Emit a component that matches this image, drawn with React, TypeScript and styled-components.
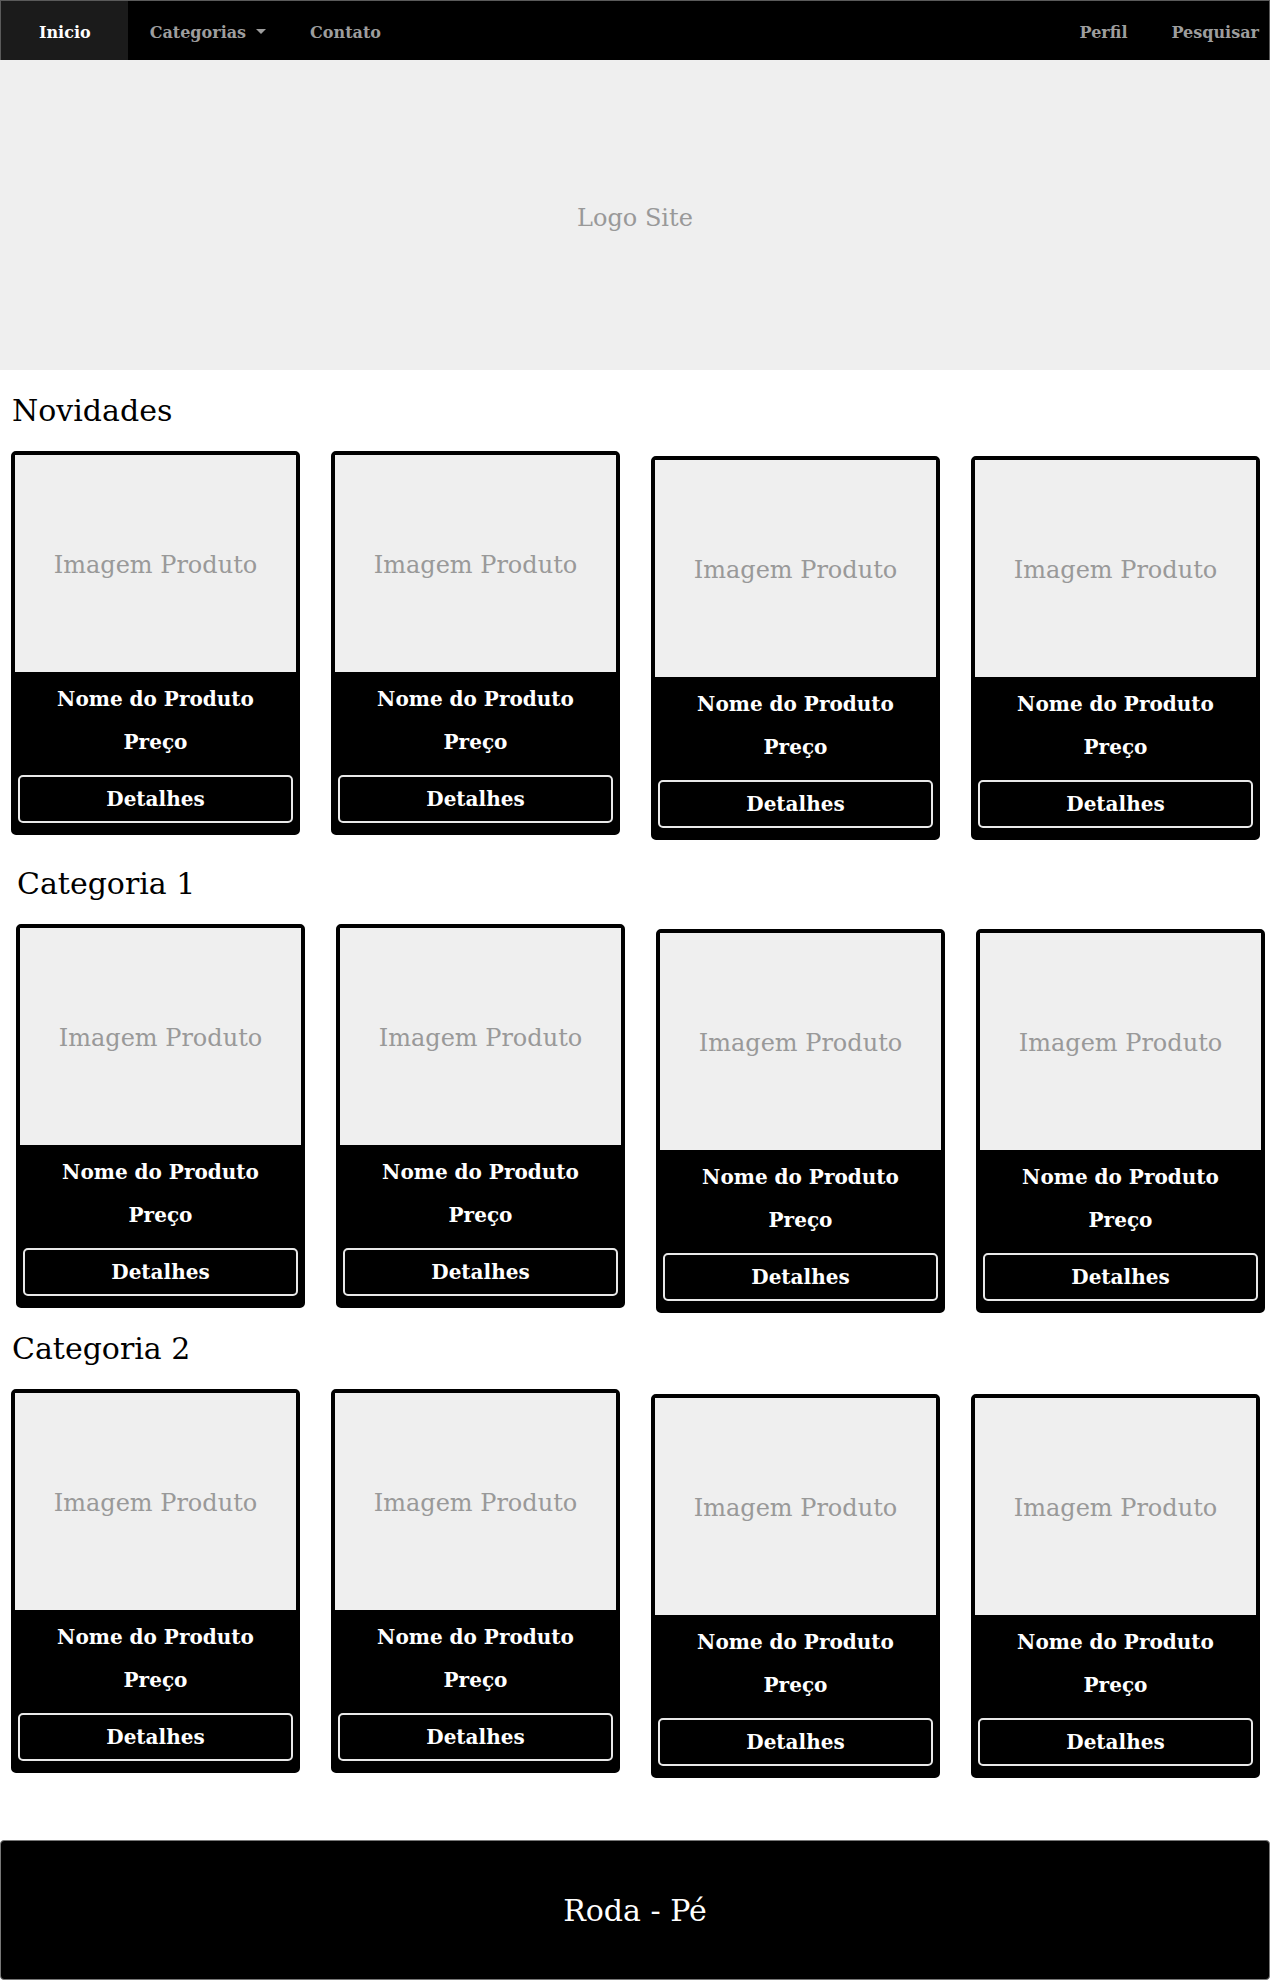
import styled, { createGlobalStyle } from "styled-components";

const GlobalStyle = createGlobalStyle`
  body {
    margin: 0;
    background: #fff;
    font-family: "DejaVu Serif", "Liberation Serif", serif;
  }
`;

const Page = styled.div`
  width: 1270px;
  display: flex;
  flex-direction: column;
`;

const NavBar = styled.nav`
  height: 60px;
  box-sizing: border-box;
  background: #000;
  border: 1px solid #5a5a5a;
  border-bottom: none;
  display: flex;
  justify-content: space-between;
  align-items: stretch;
`;

const NavGroup = styled.div`
  display: flex;
  align-items: stretch;
`;

const NavItem = styled.a<{ $active?: boolean; $last?: boolean }>`
  display: flex;
  align-items: center;
  gap: 10px;
  padding: ${(p) => (p.$active ? "3px 37px 0 38px" : p.$last ? "3px 10px 0 22px" : "3px 22px 0")};
  background: ${(p) => (p.$active ? "#1b1b1b" : "transparent")};
  color: ${(p) => (p.$active ? "#fff" : "#9d9d9d")};
  font-size: 16px;
  font-weight: bold;
  text-decoration: none;
  cursor: pointer;
`;

const Caret = styled.span`
  width: 0;
  height: 0;
  border-left: 5px solid transparent;
  border-right: 5px solid transparent;
  border-top: 5px solid #9d9d9d;
  margin-top: -2px;
`;

const Hero = styled.header`
  height: 310px;
  box-sizing: border-box;
  padding-top: 5px;
  background: #efefef;
  display: flex;
  align-items: center;
  justify-content: center;
  color: #999;
  font-size: 24px;
`;

const Section = styled.section<{ $shift: number }>`
  padding-left: ${(p) => 11 + p.$shift}px;
`;

const SectionTitle = styled.h2<{ $top: number }>`
  margin: ${(p) => p.$top}px 0 24px 1px;
  font-size: 30px;
  font-weight: normal;
  line-height: 33px;
  color: #000;
`;

const CardGrid = styled.div`
  display: grid;
  grid-template-columns: repeat(4, 289px);
  column-gap: 31px;
  align-items: start;
`;

const Card = styled.div<{ $low: boolean }>`
  margin-top: ${(p) => (p.$low ? 5 : 0)}px;
  height: 384px;
  box-sizing: border-box;
  border: 4px solid #000;
  border-radius: 5px;
  background: #000;
  display: flex;
  flex-direction: column;
`;

const ProductImage = styled.div`
  height: 217px;
  box-sizing: border-box;
  padding-top: 2px;
  background: #efefef;
  color: #999;
  font-size: 24px;
  display: flex;
  align-items: center;
  justify-content: center;
`;

const CardBody = styled.div`
  flex: 1;
  padding: 0 3px 7px;
  display: flex;
  flex-direction: column;
  align-items: stretch;
  text-align: center;
  color: #fff;
`;

const ProductName = styled.p`
  margin: 15px 0 0;
  font-size: 20px;
  font-weight: bold;
  line-height: 24px;
`;

const Price = styled.p`
  margin: 19px 0 0;
  font-size: 20px;
  font-weight: bold;
  line-height: 24px;
`;

const DetailsButton = styled.button`
  margin-top: 21px;
  height: 48px;
  background: #000;
  color: #fff;
  border: 2px solid #e8e8e8;
  border-radius: 5px;
  font-family: inherit;
  font-size: 20px;
  font-weight: bold;
  cursor: pointer;
`;

const Footer = styled.footer`
  margin-top: 62px;
  height: 140px;
  box-sizing: border-box;
  background: #000;
  border: 1px solid #777;
  border-radius: 4px;
  display: flex;
  align-items: center;
  justify-content: center;
  color: #fff;
  font-size: 30px;
`;

const sections = [
  { title: "Novidades", shift: 0, top: 24 },
  { title: "Categoria 1", shift: 5, top: 27 },
  { title: "Categoria 2", shift: 0, top: 19 },
];

const ProductCard = ({ low }: { low: boolean }) => (
  <Card $low={low}>
    <ProductImage>Imagem Produto</ProductImage>
    <CardBody>
      <ProductName>Nome do Produto</ProductName>
      <Price>Preço</Price>
      <DetailsButton>Detalhes</DetailsButton>
    </CardBody>
  </Card>
);

const App = () => {
  return (
    <Page>
      <GlobalStyle />
      <NavBar>
        <NavGroup>
          <NavItem $active>Inicio</NavItem>
          <NavItem>
            Categorias <Caret />
          </NavItem>
          <NavItem>Contato</NavItem>
        </NavGroup>
        <NavGroup>
          <NavItem>Perfil</NavItem>
          <NavItem $last>Pesquisar</NavItem>
        </NavGroup>
      </NavBar>
      <Hero>Logo Site</Hero>
      {sections.map((s) => (
        <Section key={s.title} $shift={s.shift}>
          <SectionTitle $top={s.top}>{s.title}</SectionTitle>
          <CardGrid>
            {[0, 1, 2, 3].map((i) => (
              <ProductCard key={i} low={i > 1} />
            ))}
          </CardGrid>
        </Section>
      ))}
      <Footer>Roda - Pé</Footer>
    </Page>
  );
};

export default App;
